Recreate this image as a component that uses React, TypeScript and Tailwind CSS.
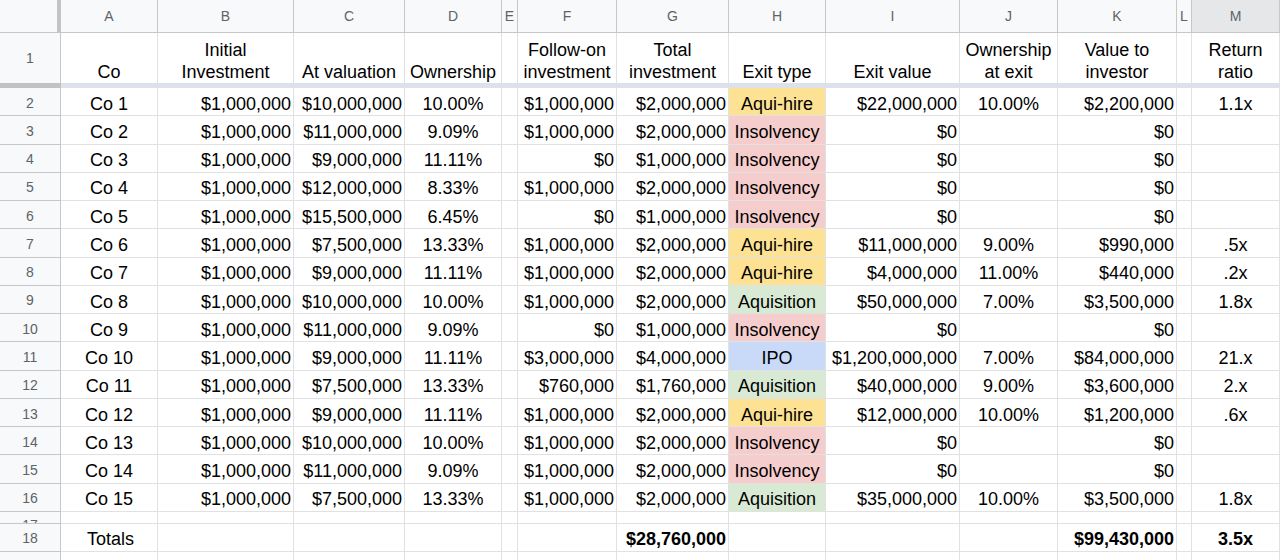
import React from "react";

type Exit = "Aqui-hire" | "Insolvency" | "Aquisition" | "IPO" | "";

interface Row {
  co: string;
  initial: string;
  valuation: string;
  own: string;
  follow: string;
  total: string;
  exit: Exit;
  exitValue: string;
  ownExit: string;
  value: string;
  ratio: string;
}

const rows: Row[] = [
  { co: "Co 1", initial: "$1,000,000", valuation: "$10,000,000", own: "10.00%", follow: "$1,000,000", total: "$2,000,000", exit: "Aqui-hire", exitValue: "$22,000,000", ownExit: "10.00%", value: "$2,200,000", ratio: "1.1x" },
  { co: "Co 2", initial: "$1,000,000", valuation: "$11,000,000", own: "9.09%", follow: "$1,000,000", total: "$2,000,000", exit: "Insolvency", exitValue: "$0", ownExit: "", value: "$0", ratio: "" },
  { co: "Co 3", initial: "$1,000,000", valuation: "$9,000,000", own: "11.11%", follow: "$0", total: "$1,000,000", exit: "Insolvency", exitValue: "$0", ownExit: "", value: "$0", ratio: "" },
  { co: "Co 4", initial: "$1,000,000", valuation: "$12,000,000", own: "8.33%", follow: "$1,000,000", total: "$2,000,000", exit: "Insolvency", exitValue: "$0", ownExit: "", value: "$0", ratio: "" },
  { co: "Co 5", initial: "$1,000,000", valuation: "$15,500,000", own: "6.45%", follow: "$0", total: "$1,000,000", exit: "Insolvency", exitValue: "$0", ownExit: "", value: "$0", ratio: "" },
  { co: "Co 6", initial: "$1,000,000", valuation: "$7,500,000", own: "13.33%", follow: "$1,000,000", total: "$2,000,000", exit: "Aqui-hire", exitValue: "$11,000,000", ownExit: "9.00%", value: "$990,000", ratio: ".5x" },
  { co: "Co 7", initial: "$1,000,000", valuation: "$9,000,000", own: "11.11%", follow: "$1,000,000", total: "$2,000,000", exit: "Aqui-hire", exitValue: "$4,000,000", ownExit: "11.00%", value: "$440,000", ratio: ".2x" },
  { co: "Co 8", initial: "$1,000,000", valuation: "$10,000,000", own: "10.00%", follow: "$1,000,000", total: "$2,000,000", exit: "Aquisition", exitValue: "$50,000,000", ownExit: "7.00%", value: "$3,500,000", ratio: "1.8x" },
  { co: "Co 9", initial: "$1,000,000", valuation: "$11,000,000", own: "9.09%", follow: "$0", total: "$1,000,000", exit: "Insolvency", exitValue: "$0", ownExit: "", value: "$0", ratio: "" },
  { co: "Co 10", initial: "$1,000,000", valuation: "$9,000,000", own: "11.11%", follow: "$3,000,000", total: "$4,000,000", exit: "IPO", exitValue: "$1,200,000,000", ownExit: "7.00%", value: "$84,000,000", ratio: "21.x" },
  { co: "Co 11", initial: "$1,000,000", valuation: "$7,500,000", own: "13.33%", follow: "$760,000", total: "$1,760,000", exit: "Aquisition", exitValue: "$40,000,000", ownExit: "9.00%", value: "$3,600,000", ratio: "2.x" },
  { co: "Co 12", initial: "$1,000,000", valuation: "$9,000,000", own: "11.11%", follow: "$1,000,000", total: "$2,000,000", exit: "Aqui-hire", exitValue: "$12,000,000", ownExit: "10.00%", value: "$1,200,000", ratio: ".6x" },
  { co: "Co 13", initial: "$1,000,000", valuation: "$10,000,000", own: "10.00%", follow: "$1,000,000", total: "$2,000,000", exit: "Insolvency", exitValue: "$0", ownExit: "", value: "$0", ratio: "" },
  { co: "Co 14", initial: "$1,000,000", valuation: "$11,000,000", own: "9.09%", follow: "$1,000,000", total: "$2,000,000", exit: "Insolvency", exitValue: "$0", ownExit: "", value: "$0", ratio: "" },
  { co: "Co 15", initial: "$1,000,000", valuation: "$7,500,000", own: "13.33%", follow: "$1,000,000", total: "$2,000,000", exit: "Aquisition", exitValue: "$35,000,000", ownExit: "10.00%", value: "$3,500,000", ratio: "1.8x" },
];

const exitBg: Record<Exit, string> = {
  "Aqui-hire": "bg-[#fde293]",
  Insolvency: "bg-[#f6cdcd]",
  Aquisition: "bg-[#d8ead3]",
  IPO: "bg-[#c9daf8]",
  "": "",
};

const grid =
  "grid grid-cols-[61px_97px_136px_111px_97px_16px_99px_112px_97px_134px_98px_119px_15px_88px]";

const letters = ["A", "B", "C", "D", "E", "F", "G", "H", "I", "J", "K", "L", "M"];

const cell = "border-r border-b border-[#e1e1e1] flex items-center pt-[5px] overflow-hidden whitespace-nowrap";
const rowHead =
  "border-r border-b border-[#c7c7c7] bg-[#f8f9fa] text-[#5f6368] text-[14px] flex items-center justify-center pt-[3px]";

function C({ children, align = "right", className = "" }: { children?: React.ReactNode; align?: "left" | "center" | "right"; className?: string }) {
  const a = align === "center" ? "justify-center" : align === "left" ? "justify-start pl-1" : "justify-end pr-[2px]";
  return <div className={`${cell} ${a} ${className}`}>{children}</div>;
}

function Head({ children }: { children?: React.ReactNode }) {
  return (
    <div className="border-r border-[#e1e1e1] flex flex-col justify-end items-center text-center leading-[22px] whitespace-nowrap">
      {children}
    </div>
  );
}

export default function App() {
  return (
    <div className="h-[560px] w-[1280px] overflow-hidden bg-white text-black text-[18px] font-['Liberation_Sans',Arial,sans-serif]">
      {/* column letters */}
      <div className={`${grid} h-[33px]`}>
        <div className="bg-[#f8f9fa] border-r-4 border-r-[#c4c4c4] border-b border-b-[#c7c7c7]" />
        {letters.map((l) => (
          <div
            key={l}
            className={`${l === "M" ? "bg-[#e6e7e9]" : "bg-[#f8f9fa]"} border-r border-b border-[#c7c7c7] text-[#5f6368] text-[14px] flex items-center justify-center pt-[1px]`}
          >
            {l}
          </div>
        ))}
      </div>

      {/* row 1 headers */}
      <div className={`${grid} h-[50px]`}>
        <div className="bg-[#f8f9fa] border-r border-[#c7c7c7] text-[#5f6368] text-[14px] flex items-center justify-center">1</div>
        <Head>Co</Head>
        <Head>
          <span>Initial</span>
          <span>Investment</span>
        </Head>
        <Head>At valuation</Head>
        <Head>Ownership</Head>
        <Head />
        <Head>
          <span>Follow-on</span>
          <span>investment</span>
        </Head>
        <Head>
          <span>Total</span>
          <span>investment</span>
        </Head>
        <Head>Exit type</Head>
        <Head>Exit value</Head>
        <Head>
          <span>Ownership</span>
          <span>at exit</span>
        </Head>
        <Head>
          <span>Value to</span>
          <span>investor</span>
        </Head>
        <Head />
        <Head>
          <span>Return</span>
          <span>ratio</span>
        </Head>
      </div>

      {/* frozen row divider */}
      <div className="flex h-[5px]">
        <div className="w-[61px] bg-[#c2c2c2]" />
        <div className="flex-1 bg-[#dde2ea]" />
      </div>

      {rows.map((r, i) => (
        <div key={r.co} className={`${grid} h-[28.27px]`}>
          <div className={rowHead}>{i + 2}</div>
          <C align="center">{r.co}</C>
          <C>{r.initial}</C>
          <C>{r.valuation}</C>
          <C align="center">{r.own}</C>
          <C />
          <C>{r.follow}</C>
          <C>{r.total}</C>
          <C align="center" className={exitBg[r.exit]}>{r.exit}</C>
          <C>{r.exitValue}</C>
          <C align="center">{r.ownExit}</C>
          <C>{r.value}</C>
          <C />
          <C align="center">{r.ratio}</C>
        </div>
      ))}

      {/* row 17, nearly hidden */}
      <div className={`${grid} h-[12px]`}>
        <div className="border-r border-b border-[#c7c7c7] bg-[#f8f9fa] text-[#5f6368] text-[14px] leading-none flex justify-center pt-[6px] overflow-hidden">
          17
        </div>
        {letters.map((l) => (
          <div key={l} className="border-r border-b border-[#e1e1e1]" />
        ))}
      </div>

      {/* totals */}
      <div className={`${grid} h-[28px]`}>
        <div className={rowHead}>18</div>
        <C align="left" className="pl-[26px]">Totals</C>
        <C />
        <C />
        <C />
        <C />
        <C />
        <C className="font-bold">$28,760,000</C>
        <C />
        <C />
        <C />
        <C className="font-bold">$99,430,000</C>
        <C />
        <C align="center" className="font-bold">3.5x</C>
      </div>

      <div className={`${grid} h-[28px]`}>
        <div className="border-r border-b border-[#c7c7c7] bg-[#f8f9fa]" />
        {letters.map((l) => (
          <div key={l} className="border-r border-b border-[#e1e1e1]" />
        ))}
      </div>
    </div>
  );
}
